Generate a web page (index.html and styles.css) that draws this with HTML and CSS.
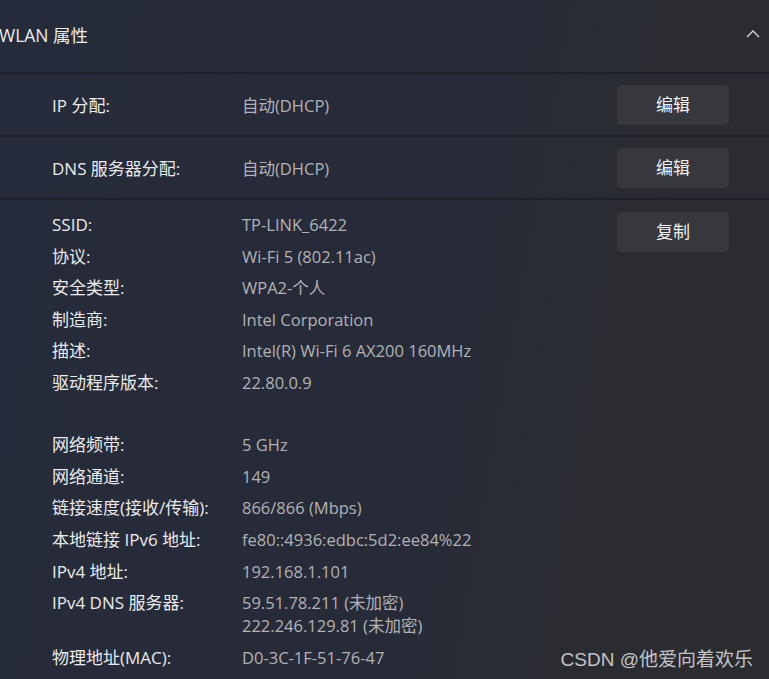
FILE: index.html
```html
<!DOCTYPE html>
<html lang="zh-CN">

<head>
    <meta charset="UTF-8">
    <title>WLAN 属性</title>
    <link rel="stylesheet" href="styles.css">
</head>

<body>
    <div class="panel">
        <div class="head">
            <span class="head-title">WLAN 属性</span>
            <svg class="chevron" width="14" height="8" viewBox="0 0 14 8">
                <path d="M1 7 L7 1 L13 7" fill="none" stroke="#d8d8d8" stroke-width="1.3" />
            </svg>
        </div>

        <div class="row">
            <span class="label">IP 分配:</span>
            <span class="value">自动(DHCP)</span>
            <button class="btn">编辑</button>
        </div>

        <div class="row">
            <span class="label">DNS 服务器分配:</span>
            <span class="value">自动(DHCP)</span>
            <button class="btn">编辑</button>
        </div>

        <div class="details">
            <div class="grid">
                <span class="label">SSID:</span><span class="value">TP-LINK_6422</span>
                <span class="label">协议:</span><span class="value">Wi-Fi 5 (802.11ac)</span>
                <span class="label">安全类型:</span><span class="value">WPA2-个人</span>
                <span class="label">制造商:</span><span class="value">Intel Corporation</span>
                <span class="label">描述:</span><span class="value">Intel(R) Wi-Fi 6 AX200 160MHz</span>
                <span class="label">驱动程序版本:</span><span class="value">22.80.0.9</span>
                <span class="spacer"></span><span class="spacer"></span>
                <span class="label">网络频带:</span><span class="value">5 GHz</span>
                <span class="label">网络通道:</span><span class="value">149</span>
                <span class="label">链接速度(接收/传输):</span><span class="value">866/866 (Mbps)</span>
                <span class="label">本地链接 IPv6 地址:</span><span class="value">fe80::4936:edbc:5d2:ee84%22</span>
                <span class="label">IPv4 地址:</span><span class="value">192.168.1.101</span>
                <span class="label">IPv4 DNS 服务器:</span><span class="value">59.51.78.211 (未加密)<br>222.246.129.81 (未加密)</span>
                <span class="label">物理地址(MAC):</span><span class="value">D0-3C-1F-51-76-47</span>
            </div>
            <button class="btn">复制</button>
        </div>
    </div>
    <div class="mark">CSDN @他爱向着欢乐</div>
</body>

</html>
```

FILE: styles.css
```css
body {
    margin: 0;
    height: 679px;
    overflow: hidden;
    background: linear-gradient(100deg, #262b3b 0%, #272b38 55%, #2b2c31 80%, #2b2c31 100%);
    font-family: "Segoe UI", "Open Sans", "Noto Sans CJK SC", sans-serif;
    color: #e6e6e6;
}

.panel {
    width: 769px;
}

.head {
    height: 72px;
    display: flex;
    align-items: center;
    justify-content: space-between;
    padding: 0 9px 0 0;
    border-bottom: 2px solid #1e2029;
}

.head-title {
    font-size: 17.5px;
    margin-left: -1px;
    margin-top: -3px;
    color: #ececec;
}

.chevron {
    margin-top: -4px;
}

.row {
    height: 61px;
    display: flex;
    align-items: center;
    padding: 0 40px 0 52px;
    border-bottom: 2px solid #1e2029;
}

.row .label {
    width: 190px;
}

.row .value {
    flex: 1;
}

.label {
    font-size: 17px;
    color: #eaeaea;
}

.value {
    font-size: 16.5px;
    color: #b2b2b5;
}

.btn {
    width: 112px;
    height: 40px;
    border: none;
    border-radius: 5px;
    background-color: #37383d;
    color: #f0f0f0;
    font-family: "Noto Sans CJK SC", sans-serif;
    font-size: 17px;
    padding: 0 0 3px;
}

.details {
    display: flex;
    align-items: flex-start;
    padding: 12px 40px 0 52px;
}

.grid {
    flex: 1;
    display: grid;
    grid-template-columns: 190px 1fr;
    row-gap: 8.6px;
    line-height: 23px;
    padding-top: 1px;
}

.spacer {
    height: 22px;
}

.mark {
    position: absolute;
    right: 16px;
    bottom: 8px;
    font-family: "Liberation Sans", "Noto Sans CJK SC", sans-serif;
    font-size: 19px;
    color: #c4c4c4;
}
```
